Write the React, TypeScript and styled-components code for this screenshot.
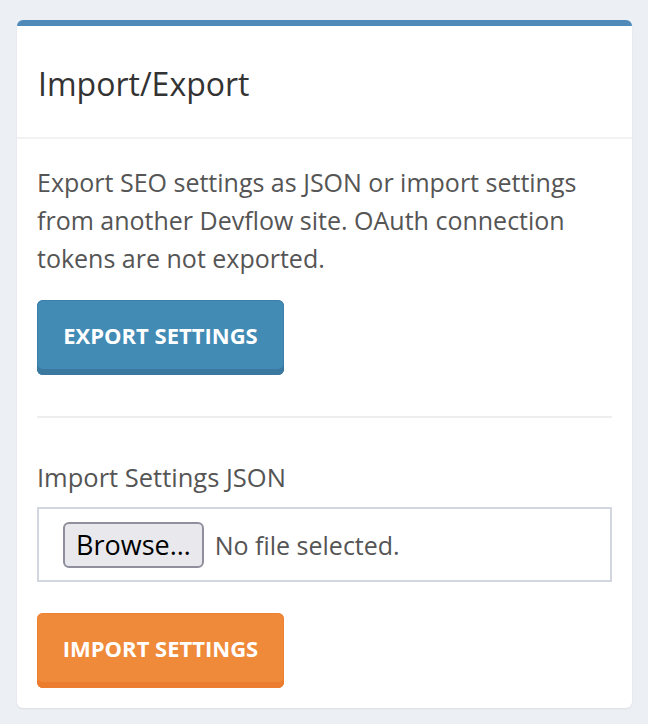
import styled, { createGlobalStyle } from 'styled-components'

const GlobalStyle = createGlobalStyle`
  html, body {
    margin: 0;
    padding: 0;
    background: #ecf0f5;
  }
  body {
    font-family: "Open Sans", "Noto Sans", sans-serif;
    color: #555;
  }
`

const Page = styled.div`
  padding: 20px 16px 16px 17px;
`

const Card = styled.section`
  background: #fff;
  border-top: 6px solid #4f8ab8;
  border-radius: 6px;
  box-shadow: 0 1px 2px rgba(0, 0, 0, 0.08);
`

const CardHeader = styled.header`
  height: 113px;
  box-sizing: border-box;
  display: flex;
  align-items: center;
  padding: 3px 21px 0;
  border-bottom: 2px solid #f2f2f2;
`

const Title = styled.h3`
  margin: 0;
  font-size: 32px;
  font-weight: 400;
  color: #333;
`

const CardBody = styled.div`
  padding: 24px 20px 20px;
`

const Text = styled.p`
  margin: 0 0 23px;
  font-size: 25px;
  line-height: 38px;
  color: #555;
`

const ActionButton = styled.button<{ $tone: 'blue' | 'orange' }>`
  display: block;
  width: 247px;
  height: 75px;
  border: 0;
  border-radius: 6px;
  padding: 0 0 6px;
  font-family: "Open Sans", "Noto Sans", sans-serif;
  font-size: 22px;
  font-weight: 700;
  color: #fff;
  text-transform: uppercase;
  cursor: pointer;
  background: ${p => (p.$tone === 'blue' ? '#428bb5' : '#f08a3b')};
  box-shadow: inset 0 -6px 0 ${p => (p.$tone === 'blue' ? '#3a78a0' : '#ec7d2e')},
    inset 0 0 0 1px ${p => (p.$tone === 'blue' ? '#3c7fa8' : '#ee8233')};
`

const Divider = styled.hr`
  border: 0;
  height: 2px;
  background: #eeeeee;
  margin: 41px 0 0;
`

const Label = styled.label`
  display: block;
  margin: 40px 0 11px;
  font-size: 25.5px;
  line-height: 38px;
  color: #555;
`

const FileBox = styled.div`
  display: flex;
  align-items: center;
  gap: 11px;
  height: 75px;
  box-sizing: border-box;
  padding: 0 24px;
  border: 2px solid #d2d6de;
  margin-bottom: 31px;
`

const BrowseButton = styled.button`
  height: 46px;
  box-sizing: border-box;
  padding: 0 11px;
  background: #e9e9ed;
  border: 2px solid #8f8f9d;
  border-radius: 6px;
  font-family: "Open Sans", "Noto Sans", sans-serif;
  font-size: 27px;
  color: #000;
  cursor: pointer;
`

const FileName = styled.span`
  font-size: 25px;
  color: #555;
`

export default function App() {
  return (
    <>
      <GlobalStyle />
      <Page>
        <Card>
          <CardHeader>
            <Title>Import/Export</Title>
          </CardHeader>
          <CardBody>
            <Text>
              Export SEO settings as JSON or import settings from another Devflow site. OAuth
              connection tokens are not exported.
            </Text>
            <ActionButton $tone="blue" type="button">Export Settings</ActionButton>
            <Divider />
            <Label htmlFor="import-file">Import Settings JSON</Label>
            <FileBox id="import-file">
              <BrowseButton type="button">Browse…</BrowseButton>
              <FileName>No file selected.</FileName>
            </FileBox>
            <ActionButton $tone="orange" type="button">Import Settings</ActionButton>
          </CardBody>
        </Card>
      </Page>
    </>
  )
}
